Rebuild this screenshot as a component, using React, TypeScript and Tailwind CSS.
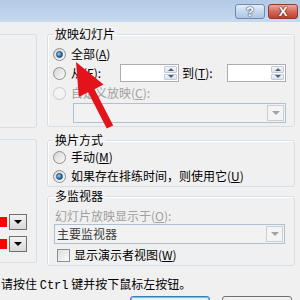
import type { ReactNode } from "react";

const cjk = "font-['Noto_Sans_CJK_SC','Noto_Sans',sans-serif]";

function Radio({ checked = false, disabled = false }: { checked?: boolean; disabled?: boolean }) {
  return (
    <span
      className={`flex h-[13px] w-[13px] shrink-0 items-center justify-center rounded-full border ${
        disabled
          ? "border-[#c9c9c9] bg-[#f4f4f4]"
          : "border-[#8e8f8f] bg-gradient-to-br from-[#d4d4d4] to-[#fbfbfb]"
      }`}
    >
      {checked ? (
        <span className="h-[7px] w-[7px] rounded-full border border-[#1d4d78] bg-[radial-gradient(circle_at_35%_35%,#9fd2f5,#2a6ea6_60%,#123c63)]" />
      ) : null}
    </span>
  );
}

function Check() {
  return (
    <span className="h-[13px] w-[13px] shrink-0 border border-[#8e8f8f] bg-gradient-to-br from-[#dcdcdc] to-[#fbfbfb]" />
  );
}

function Spin() {
  return (
    <div className="flex h-[18px] w-[59px] border border-[#abadb3] bg-white">
      <div className="flex-1" />
      <div className="flex w-[15px] flex-col gap-px bg-white p-px">
        <span className="flex flex-1 items-center justify-center rounded-[1px] border border-[#c3cbd6] bg-gradient-to-b from-[#f4f6f9] to-[#dde3ea]">
          <span className="h-0 w-0 border-x-[3px] border-b-[3px] border-x-transparent border-b-[#4d6185]" />
        </span>
        <span className="flex flex-1 items-center justify-center rounded-[1px] border border-[#c3cbd6] bg-gradient-to-b from-[#f4f6f9] to-[#dde3ea]">
          <span className="h-0 w-0 border-x-[3px] border-t-[3px] border-x-transparent border-t-[#4d6185]" />
        </span>
      </div>
    </div>
  );
}

function Combo({ className, children }: { className: string; children?: ReactNode }) {
  return (
    <div className={`flex h-[20px] items-stretch border border-[#afc0d2] bg-[#f2f2f2] ${className}`}>
      <div className="flex flex-1 items-center pl-[2px] text-[#3c3c3c]">{children}</div>
      <div className="m-px flex w-[17px] items-center justify-center border border-[#c6ced7] bg-[#f4f4f4]">
        <span className="h-0 w-0 border-x-[4px] border-t-[4px] border-x-transparent border-t-[#a3a3a3]" />
      </div>
    </div>
  );
}

function ColorPick() {
  return (
    <div className="flex items-center">
      <span className="h-[10px] w-[7px] bg-[#ff0000]" />
      <span className="ml-[2px] flex h-[16px] w-[18px] items-center justify-center border border-[#707070] bg-gradient-to-b from-[#f2f2f2] to-[#d9d9d9]">
        <span className="h-0 w-0 border-x-[4px] border-t-[4px] border-x-transparent border-t-black" />
      </span>
    </div>
  );
}

function Group({ title, className, children }: { title: string; className: string; children: ReactNode }) {
  return (
    <fieldset className={`rounded-[3px] border border-[#d5dfe5] px-[5px] shadow-[inset_1px_1px_0_#fff] ${className}`}>
      <legend className="px-[2px] leading-[16px] text-black">{title}</legend>
      {children}
    </fieldset>
  );
}

export default function App() {
  return (
    <div className={`relative h-[300px] w-[300px] overflow-hidden bg-[#f0f0f0] text-[12px] leading-[16px] text-black ${cjk}`}>
      {/* title bar */}
      <div className="flex h-[22px] items-start justify-end gap-[3px] bg-gradient-to-b from-[#b2cae5] to-[#c7daef] pr-[2px] pt-[4px]">
        <div className="flex h-[15px] w-[30px] items-center justify-center rounded-[3px] border border-[#6f8aad] bg-gradient-to-b from-[#e4eef9] via-[#c6d8ee] to-[#aec5e2] font-['Liberation_Sans',sans-serif] text-[13px] font-bold text-white [text-shadow:0_0_2px_#1f3550,0_0_1px_#1f3550]">
          ?
        </div>
        <div className="flex h-[15px] w-[30px] items-center justify-center rounded-[3px] border border-[#8c3a33] bg-gradient-to-b from-[#eba89e] via-[#d4685b] to-[#c0402f] font-['Liberation_Sans',sans-serif] text-[13px] font-bold text-white [text-shadow:0_0_2px_#4a1510,0_0_1px_#4a1510]">
          X
        </div>
      </div>

      <div className="flex">
        {/* left, cropped panel */}
        <div className="flex w-[37px] flex-col">
          <div className="mt-[12px] h-[94px] rounded-r-[3px] border-y border-r border-[#d5dfe5]" />
          <div className="mt-[11px] flex h-[124px] flex-col gap-[6px] rounded-r-[3px] border-y border-r border-[#d5dfe5] pt-[74px]">
            <ColorPick />
            <ColorPick />
          </div>
        </div>

        {/* right column */}
        <div className="ml-[10px] flex w-[248px] flex-col">
          <Group title="放映幻灯片" className="mt-[4px] pb-[3px] pt-[4px]">
            <div className="flex h-[16px] items-center gap-[5px]">
              <Radio checked />
              <span>
                全部(<u>A</u>)
              </span>
            </div>
            <div className="mt-[2px] flex h-[18px] items-center">
              <Radio />
              <span className="ml-[5px] w-[49px]">
                从(<u>F</u>):
              </span>
              <Spin />
              <span className="ml-[3px] w-[45px]">
                到(<u>T</u>):
              </span>
              <Spin />
            </div>
            <div className="mt-[3px] flex h-[16px] items-center gap-[5px] text-[#a0a0a0]">
              <Radio disabled />
              <span>
                自定义放映(<u>C</u>):
              </span>
            </div>
            <Combo className="ml-[20px] mt-[2px] w-[213px]" />
          </Group>

          <Group title="换片方式" className="mt-[5px] pb-[2px] pt-px">
            <div className="flex h-[16px] items-center gap-[5px]">
              <Radio />
              <span>
                手动(<u>M</u>)
              </span>
            </div>
            <div className="mt-[3px] flex h-[16px] items-center gap-[5px]">
              <Radio checked />
              <span>
                如果存在排练时间，则使用它(<u>U</u>)
              </span>
            </div>
          </Group>

          <Group title="多监视器" className="mt-px pb-[2px] pt-[4px]">
            <div className="h-[16px] pl-[2px] text-[#a0a0a0]">
              幻灯片放映显示于(<u>O</u>):
            </div>
            <Combo className="ml-px w-[231px]">主要监视器</Combo>
            <div className="mt-[3px] flex h-[16px] items-center gap-[4px] pl-[4px]">
              <Check />
              <span>
                显示演示者视图(<u>W</u>)
              </span>
            </div>
          </Group>
        </div>
      </div>

      <div className="mt-[10px] pl-px">
        请按住 <span className="font-['Liberation_Mono',monospace]">Ctrl</span> 键并按下鼠标左按钮。
      </div>
      <div className="mt-[2px] flex">
        <div className="ml-[130px] h-[20px] w-[80px] rounded-[3px] border border-[#3c7fb1] bg-gradient-to-b from-[#e5f4fc] to-[#c4e5f6] shadow-[inset_0_0_0_1px_#48d2f7]" />
        <div className="ml-[12px] h-[20px] w-[70px] rounded-[3px] border border-[#707070] bg-gradient-to-b from-[#f2f2f2] to-[#dddddd]" />
      </div>

      {/* red pointer arrow */}
      <svg className="pointer-events-none absolute left-0 top-0" width="300" height="300" viewBox="0 0 300 300">
        <polygon
          points="76,62 103.5,84.5 94.5,89.2 113.2,125.4 106.8,128.6 88.1,92.3 78.8,97.1"
          fill="#e3131b"
        />
      </svg>
    </div>
  );
}
